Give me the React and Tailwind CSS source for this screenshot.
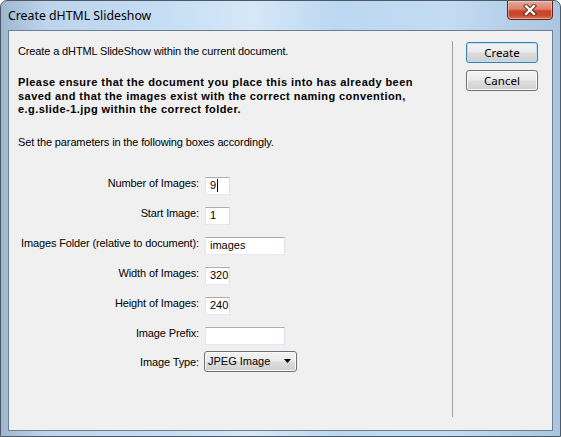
import React from "react";

function Input({ value, width = "w-[25px]", caret = false }) {
  return (
    <div
      className={`${width} h-[18px] bg-white border border-[#abadb3] border-l-[#e2e3ea] border-r-[#dbdfe6] border-b-[#e3e9ef] flex items-center pl-[4px] text-[11px] leading-[13px] text-black`}
    >
      <span>{value}</span>
      {caret && <span className="inline-block w-px h-[13px] bg-black ml-[1px]" />}
    </div>
  );
}

function Row({ label, children, labelPad = "pt-0" }) {
  return (
    <div className="flex items-start">
      <div className={`w-[181px] text-right whitespace-nowrap text-[11px] tracking-[-0.13px] leading-[13px] ${labelPad}`}>{label}</div>
      <div className="ml-[6px]">{children}</div>
    </div>
  );
}

function Button({ children, primary = false }) {
  return (
    <div
      className={`w-[72px] h-[21px] rounded-[3px] border ${
        primary ? "border-[#3c7fb1] shadow-[inset_0_0_0_1px_#b6e3f9]" : "border-[#707070] shadow-[inset_0_0_0_1px_#fbfbfb]"
      } bg-[linear-gradient(180deg,#f2f2f2_0%,#ebebeb_48%,#dddddd_52%,#cfcfcf_100%)] flex items-center justify-center text-[11.5px] leading-[14px] text-black`}
      style={{ fontFamily: '"Noto Sans", sans-serif' }}
    >
      {children}
    </div>
  );
}

export default function App() {
  return (
    <div
      className="w-[561px] h-[437px] relative overflow-hidden rounded-t-[7px] border border-[#4f5966] bg-[linear-gradient(90deg,#9fb8d1_0%,#bcd5ec_8%,#c6def4_30%,#d6e8f8_45%,#bcd7f1_60%,#c3dcf3_80%,#aac5e0_100%)]"
      style={{ fontFamily: '"Liberation Sans", Arial, sans-serif' }}
    >
      {/* title bar */}
      <div className="h-[29px] flex items-center pl-[7px]">
        <span
          className="text-[12.3px] leading-[14px] text-black mt-[1px]"
          style={{ fontFamily: '"Noto Sans", sans-serif' }}
        >
          Create dHTML Slideshow
        </span>
      </div>

      {/* close button */}
      <div className="absolute top-[-1px] right-[7px] w-[46px] h-[20px] rounded-b-[4px] border border-[#5e2419] bg-[linear-gradient(180deg,#e9a99a_0%,#dd7f6b_45%,#c9452c_55%,#c84a2f_80%,#d77961_100%)] flex items-center justify-center shadow-[inset_0_0_0_1px_rgba(255,220,210,0.5)]">
        <svg width="14" height="12" viewBox="0 0 14 12">
          <path d="M3 2 L11 10 M11 2 L3 10" stroke="#5a2418" strokeWidth="4.2" strokeLinecap="square" />
          <path d="M3 2 L11 10 M11 2 L3 10" stroke="#ffffff" strokeWidth="2.4" strokeLinecap="square" />
        </svg>
      </div>

      {/* client area */}
      <div className="mx-[7px] h-[401px] border border-[#6d7f93] bg-[#f0f0f0] flex text-black">
        {/* left content */}
        <div className="w-[443px] pl-[9px] pt-[14px]">
          <p className="text-[11px] tracking-[-0.13px] leading-[13px] whitespace-nowrap">Create a dHTML SlideShow within the current document.</p>
          <p className="text-[11px] tracking-[0.45px] leading-[13.5px] font-bold mt-[18px] whitespace-nowrap">
            Please ensure that the document you place this into has already been
            <br />
            saved and that the images exist with the correct naming convention,
            <br />
            e.g.slide-1.jpg within the correct folder.
          </p>
          <p className="text-[11px] tracking-[-0.13px] leading-[13px] mt-[19px] whitespace-nowrap">Set the parameters in the following boxes accordingly.</p>

          <div className="mt-[28px] flex flex-col gap-[12px]">
            <Row label="Number of Images:">
              <Input value="9" caret />
            </Row>
            <Row label="Start Image:">
              <Input value="1" />
            </Row>
            <Row label="Images Folder (relative to document):">
              <Input value="images" width="w-[80px]" />
            </Row>
            <Row label="Width of Images:">
              <Input value="320" />
            </Row>
            <Row label="Height of Images:">
              <Input value="240" />
            </Row>
            <Row label="Image Prefix:">
              <Input value="" width="w-[80px]" />
            </Row>
            <div className="flex items-start -mt-[6px]">
              <div className="w-[181px] text-right text-[11px] tracking-[-0.13px] leading-[13px] pt-[5px]">Image Type:</div>
              <div className="ml-[5px] w-[93px] h-[21px] rounded-[3px] border border-[#707070] bg-[linear-gradient(180deg,#f2f2f2_0%,#ebebeb_48%,#dddddd_52%,#cfcfcf_100%)] shadow-[inset_0_0_0_1px_#fbfbfb] flex items-center pl-[3px] pr-[5px] text-[11px] leading-[13px]">
                <span className="flex-1">JPEG Image</span>
                <svg width="7" height="4" viewBox="0 0 7 4">
                  <path d="M0 0 H7 L3.5 4 Z" fill="#000" />
                </svg>
              </div>
            </div>
          </div>
        </div>

        {/* separator */}
        <div className="w-px bg-[#a0a0a0] mt-[10px] mb-[13px]" />

        {/* right buttons */}
        <div className="pl-[13px] pt-[11px] flex flex-col gap-[7px]">
          <Button primary>Create</Button>
          <Button>Cancel</Button>
        </div>
      </div>
    </div>
  );
}
